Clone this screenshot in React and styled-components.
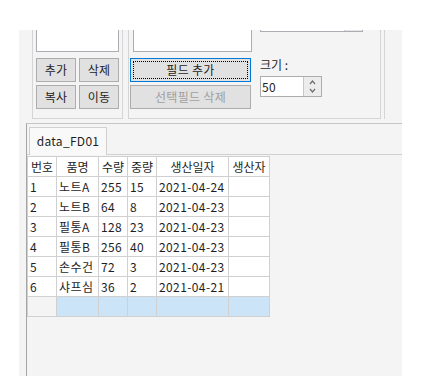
import React from "react";
import styled, { createGlobalStyle } from "styled-components";

const GlobalStyle = createGlobalStyle`
  body {
    margin: 0;
    background: #fff;
    font-family: "Noto Sans CJK KR", "Noto Sans", sans-serif;
    font-size: 12px;
    color: #1e1e1e;
  }
`;

const Window = styled.div`
  margin: 30px 0 0 19px;
  width: 383px;
  height: 346px;
  background: #f4f4f4;
  overflow: hidden;
  display: flex;
  flex-direction: column;
`;

const TopRow = styled.div`
  display: flex;
  height: 93px;
  padding-left: 13px;
  flex-shrink: 0;
`;

const GroupBox = styled.div`
  box-sizing: border-box;
  height: 89px;
  width: ${(p) => p.$w}px;
  margin-left: ${(p) => p.$ml || 0}px;
  padding: 0 ${(p) => p.$pr || 0}px 0 ${(p) => p.$pl || 0}px;
  border: 1px solid #d5d5d5;
  border-top: none;
  display: flex;
  flex-shrink: 0;
`;

const OpenGroup = styled.div`
  margin-left: 3px;
  width: 40px;
  height: 89px;
  border-left: 1px solid #d5d5d5;
  flex-shrink: 0;
`;

const Column = styled.div`
  display: flex;
  flex-direction: column;
  width: ${(p) => p.$w}px;
  margin-left: ${(p) => p.$ml || 0}px;
`;

const ListBox = styled.div`
  box-sizing: border-box;
  height: 22px;
  width: ${(p) => p.$w}px;
  margin-left: ${(p) => p.$ml || 0}px;
  background: #fff;
  border: 1px solid #abadb3;
  border-top: none;
`;

const ButtonGrid = styled.div`
  display: grid;
  grid-template-columns: ${(p) => p.$cols};
  grid-auto-rows: 24px;
  gap: 3px;
  margin-top: 6px;
`;

const Button = styled.button`
  box-sizing: border-box;
  margin: 0;
  padding: 0;
  height: 24px;
  background: #e1e1e1;
  border: 1px solid ${(p) => (p.$focus ? "#0078d7" : "#adadad")};
  font-family: inherit;
  font-size: 12px;
  line-height: 20px;
  letter-spacing: 0.3px;
  color: ${(p) => (p.disabled ? "#a0a0a0" : "#1e1e1e")};
  outline: ${(p) => (p.$focus ? "1px dotted #000" : "none")};
  outline-offset: -4px;
`;

const Combo = styled.div`
  box-sizing: border-box;
  display: flex;
  justify-content: flex-end;
  width: 103px;
  height: 2px;
  background: #fff;
  border: 1px solid #abadb3;
  border-top: none;
`;

const ComboButton = styled.div`
  width: 17px;
  background: #e5e5e5;
  border-left: 1px solid #c8c8c8;
`;

const Label = styled.div`
  margin-top: 24px;
  line-height: 18px;
  color: #1e1e1e;
`;

const Spin = styled.div`
  box-sizing: border-box;
  display: flex;
  width: 62px;
  height: 21px;
  margin-top: 2px;
  border: 1px solid #adadad;
  background: #fff;
`;

const SpinText = styled.div`
  flex: 1;
  padding-left: 1px;
  line-height: 19px;
  letter-spacing: 0.4px;
  color: #1e1e1e;
`;

const SpinButtons = styled.div`
  width: 17px;
  border-left: 1px solid #c8c8c8;
  background: #ececec;
  display: flex;
  align-items: center;
  justify-content: center;
`;

const TabArea = styled.div`
  flex: 1;
  margin-left: 7px;
  border-top: 1px solid #c6c6c6;
  border-left: 1px solid #a5a5a5;
  display: flex;
  flex-direction: column;
`;

const TabStrip = styled.div`
  display: flex;
  height: 31px;
  box-sizing: border-box;
`;

const TabGap = styled.div`
  width: ${(p) => (p.$w ? `${p.$w}px` : "auto")};
  flex: ${(p) => (p.$w ? "none" : 1)};
  border-bottom: 1px solid #d0d0d0;
`;

const Tab = styled.div`
  box-sizing: border-box;
  margin-top: 3px;
  height: 28px;
  width: 78px;
  padding-top: 4px;
  text-align: center;
  background: #f9f9f9;
  border: 1px solid #d0d0d0;
  border-bottom: none;
  line-height: 18px;
  letter-spacing: 0.3px;
  color: #1e1e1e;
`;

const TabPage = styled.div`
  padding-top: 1px;
`;

const Grid = styled.div`
  display: inline-grid;
  grid-template-columns: 28px 41px 28px 28px 71px 40px;
  grid-auto-rows: 19px;
  gap: 1px;
  padding: 1px;
  background: #d0d0d0;
`;

const Cell = styled.div`
  background: ${(p) => p.$bg || "#fff"};
  padding-left: ${(p) => (p.$head ? 0 : 2)}px;
  text-align: ${(p) => (p.$head ? "center" : "left")};
  line-height: 19px;
  letter-spacing: ${(p) => (p.$head ? 0 : 0.4)}px;
  white-space: nowrap;
  overflow: hidden;
  color: #1e1e1e;
`;

const Chevron = ({ up }) => (
  <svg width="7" height="5" viewBox="0 0 7 5">
    <polyline
      points={up ? "1,4 3.5,1 6,4" : "1,1 3.5,4 6,1"}
      fill="none"
      stroke="#6d6d6d"
      strokeWidth="1.2"
    />
  </svg>
);

const SpinArrows = styled.div`
  display: flex;
  flex-direction: column;
  gap: 3px;
`;

const headers = ["번호", "품명", "수량", "중량", "생산일자", "생산자"];
const rows = [
  ["1", "노트A", "255", "15", "2021-04-24", ""],
  ["2", "노트B", "64", "8", "2021-04-23", ""],
  ["3", "필통A", "128", "23", "2021-04-23", ""],
  ["4", "필통B", "256", "40", "2021-04-23", ""],
  ["5", "손수건", "72", "3", "2021-04-23", ""],
  ["6", "샤프심", "36", "2", "2021-04-21", ""],
];

export default function App() {
  return (
    <>
      <GlobalStyle />
      <Window>
        <TopRow>
          <GroupBox $w={91} $pl={3} $pr={3}>
            <Column $w={83}>
              <ListBox $w={83} />
              <ButtonGrid $cols="40px 40px">
                <Button>추가</Button>
                <Button>삭제</Button>
                <Button>복사</Button>
                <Button>이동</Button>
              </ButtonGrid>
            </Column>
          </GroupBox>
          <GroupBox $w={253} $ml={5} $pl={1}>
            <Column $w={121}>
              <ListBox $w={119} $ml={3} />
              <ButtonGrid $cols="121px">
                <Button $focus>필드 추가</Button>
                <Button disabled>선택필드 삭제</Button>
              </ButtonGrid>
            </Column>
            <Column $w={103} $ml={9}>
              <Combo>
                <ComboButton />
              </Combo>
              <Label>크기 :</Label>
              <Spin>
                <SpinText>50</SpinText>
                <SpinButtons>
                  <SpinArrows>
                    <Chevron up />
                    <Chevron />
                  </SpinArrows>
                </SpinButtons>
              </Spin>
            </Column>
          </GroupBox>
          <OpenGroup />
        </TopRow>
        <TabArea>
          <TabStrip>
            <TabGap $w={2} />
            <Tab>data_FD01</Tab>
            <TabGap />
          </TabStrip>
          <TabPage>
            <Grid>
              {headers.map((h) => (
                <Cell key={h} $head>
                  {h}
                </Cell>
              ))}
              {rows.map((r) =>
                r.map((c, i) => <Cell key={r[0] + i}>{c}</Cell>)
              )}
              <Cell $bg="#f4f4f4" />
              {[1, 2, 3, 4, 5].map((i) => (
                <Cell key={"n" + i} $bg="#cce4f7" />
              ))}
            </Grid>
          </TabPage>
        </TabArea>
      </Window>
    </>
  );
}
